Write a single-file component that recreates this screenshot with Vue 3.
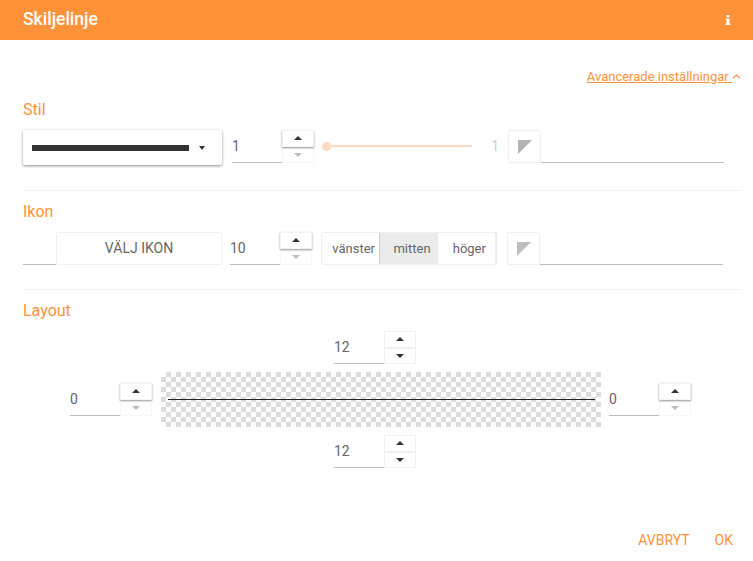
<script setup>
const toggles = [
  { label: 'vänster', on: false },
  { label: 'mitten', on: true },
  { label: 'höger', on: false }
]
</script>

<template>
  <div class="dialog">
    <header class="header">
      <span class="title">Skiljelinje</span>
      <svg class="info" width="6" height="10" viewBox="0 0 6 10"><path d="M1.500 0h3v2.200h-3zM.5 3.400h4v5.200h1v1.400h-5v-1.400h1v-3.800h-1z" fill="#fff"/></svg>
    </header>
    <main class="body">
      <div class="advanced">
        <a class="adv-link">Avancerade inställningar&nbsp;</a>
        <svg width="9" height="5" viewBox="0 0 9 5"><path d="M1 4.200 4.500 1 8 4.200" fill="none" stroke="#ff9138" stroke-width="1.200"/></svg>
      </div>

      <h3 class="sec first">Stil</h3>
      <div class="row">
        <div class="select">
          <span class="sel-line"></span>
          <span class="caret sel-caret"></span>
        </div>
        <div class="spin">
          <div class="val">1</div>
          <div class="btns">
            <div class="btn raised"><span class="up"></span></div>
            <div class="btn off"><span class="down"></span></div>
          </div>
        </div>
        <div class="slider"><span class="thumb"></span><span class="track"></span></div>
        <div class="slider-val">1</div>
        <div class="swatch"><svg width="14" height="14" viewBox="0 0 14 14"><path d="M0 0h14L0 14z" fill="#b3b3b3"/></svg></div>
        <div class="line"></div>
      </div>
      <div class="sep sep1"></div>

      <h3 class="sec sec2">Ikon</h3>
      <div class="row row2">
        <div class="stub"></div>
        <button class="pick">VÄLJ IKON</button>
        <div class="spin">
          <div class="val">10</div>
          <div class="btns">
            <div class="btn raised"><span class="up"></span></div>
            <div class="btn off"><span class="down"></span></div>
          </div>
        </div>
        <div class="toggle">
          <span v-for="t in toggles" :key="t.label" class="tg" :class="{ on: t.on }">{{ t.label }}</span>
        </div>
        <div class="swatch"><svg width="14" height="14" viewBox="0 0 14 14"><path d="M0 0h14L0 14z" fill="#bdbdbd"/></svg></div>
        <div class="line"></div>
      </div>
      <div class="sep sep2"></div>

      <h3 class="sec sec3">Layout</h3>
      <div class="spin pad-v">
        <div class="val">12</div>
        <div class="btns">
          <div class="btn"><span class="up"></span></div>
          <div class="btn"><span class="down"></span></div>
        </div>
      </div>
      <div class="mid">
        <div class="spin">
          <div class="val">0</div>
          <div class="btns">
            <div class="btn raised"><span class="up"></span></div>
            <div class="btn off"><span class="down"></span></div>
          </div>
        </div>
        <div class="checker"><span class="preview"></span></div>
        <div class="spin">
          <div class="val">0</div>
          <div class="btns">
            <div class="btn raised"><span class="up"></span></div>
            <div class="btn off"><span class="down"></span></div>
          </div>
        </div>
      </div>
      <div class="spin pad-v">
        <div class="val">12</div>
        <div class="btns">
          <div class="btn"><span class="up"></span></div>
          <div class="btn"><span class="down"></span></div>
        </div>
      </div>

      <footer class="footer">
        <span>AVBRYT</span>
        <span>OK</span>
      </footer>
    </main>
  </div>
</template>

<style>
html, body { margin: 0; background: #fff; }
</style>

<style scoped>
.dialog {
  width: 753px;
  height: 561px;
  overflow: hidden;
  background: #fff;
  font-family: Roboto, "Liberation Sans", sans-serif;
  color: #666;
}
.header {
  height: 40px;
  background: #ff9138;
  display: flex;
  align-items: center;
  justify-content: space-between;
  padding: 0 22px 2px 23px;
  box-sizing: border-box;
  color: #fff;
}
.title { font-size: 17.500px; font-weight: 500; }
.info { display: block; margin-top: 1px; }
.body { padding: 0 12px 0 23px; }
.advanced {
  margin-top: 26px;
  height: 20px;
  display: flex;
  align-items: center;
  justify-content: flex-end;
  color: #ff9138;
  font-size: 13px;
}
.adv-link { text-decoration: underline; }
.sec {
  margin: 11px 0 10px;
  height: 20px;
  line-height: 21px;
  font-size: 16px;
  font-weight: 400;
  color: #ff9138;
}
.sec.first { margin-top: 13px; margin-bottom: 11px; }
.sec.sec2 { line-height: 20px; }
.sec.sec3 { margin-top: 10px; margin-bottom: 11px; line-height: 22px; }
.row { display: flex; height: 33px; align-items: flex-start; margin-right: 17px; }
.row2 { margin-right: 18px; }
.select {
  width: 199px;
  height: 35px;
  margin-right: 10px;
  box-sizing: border-box;
  padding: 0 17px 0 9px;
  border-radius: 2px;
  background: #fff;
  box-shadow: 0 1px 3px rgba(0, 0, 0, .45);
  display: flex;
  align-items: center;
  justify-content: space-between;
}
.sel-line { width: 157px; height: 6px; background: #333; margin-top: 1px; }
.caret {
  width: 0; height: 0;
  border: 3.500px solid transparent;
  border-top: 4px solid #333;
  border-bottom: 0;
}
.spin { display: flex; width: 82px; height: 33px; flex: none; }
.val {
  width: 50px;
  height: 33px;
  box-sizing: border-box;
  border-bottom: 1px solid #bdbdbd;
  font-size: 14px;
  line-height: 32px;
}
.btns { width: 32px; height: 33px; display: flex; flex-direction: column; }
.btn {
  flex: 1;
  box-sizing: border-box;
  border: 1px solid #f0f0f0;
  display: flex;
  align-items: center;
  justify-content: center;
}
.btn.raised { border-color: #f2f2f2; box-shadow: 0 1px 2px rgba(0, 0, 0, .4); position: relative; }
.btn.off { border-color: #f7f7f7; }
.up, .down { width: 0; height: 0; border-left: 4px solid transparent; border-right: 4px solid transparent; }
.up { border-bottom: 4px solid #333; }
.down { border-top: 4px solid #333; }
.off .down { border-top-color: #bdbdbd; }
.slider { width: 150px; height: 33px; margin-left: 8px; display: flex; align-items: center; }
.thumb { width: 9px; height: 9px; flex: none; border-radius: 50%; background: #ffd9bd; margin-top: -1px; }
.track { flex: 1; height: 2px; background: #ffd9bd; margin-top: -1px; }
.slider-val { width: 36px; padding-right: 9px; box-sizing: border-box; text-align: right; font-size: 14px; line-height: 32px; color: #ccc; }
.swatch {
  width: 33px;
  height: 33px;
  flex: none;
  box-sizing: border-box;
  border: 1px solid #f0f0f0;
  border-radius: 2px;
  display: flex;
  align-items: center;
  justify-content: center;
}
.line { flex: 1; height: 33px; box-sizing: border-box; border-bottom: 1px solid #bdbdbd; }
.sep { height: 1px; background: #eee; }
.sep1 { margin-top: 27px; }
.sep2 { margin-top: 24px; }
.stub { width: 33px; height: 33px; box-sizing: border-box; border-bottom: 1px solid #bdbdbd; flex: none; }
.pick {
  width: 166px;
  height: 33px;
  margin-right: 8px;
  box-sizing: border-box;
  border: 1px solid #f0f0f0;
  border-radius: 2px;
  background: #fff;
  color: #666;
  font: 400 14px Roboto, "Liberation Sans", sans-serif;
  padding: 0 0 2px;
}
.toggle {
  margin-left: 9px;
  margin-right: 11px;
  width: 175px;
  height: 33px;
  flex: none;
  display: flex;
  box-sizing: border-box;
  border: 1px solid #f0f0f0;
  border-radius: 2px;
  box-shadow: 1px 0 1px rgba(0, 0, 0, .1);
}
.tg { flex: 1 1 0; padding-left: 6px; text-align: center; font-size: 13px; line-height: 31px; }
.tg.on { background: #ebebeb; border-left: 1px solid #ccc; }
.pad-v { margin-left: 311px; }
.mid { display: flex; align-items: center; margin: 8px 0 8px 47px; }
.checker {
  width: 440px;
  height: 55px;
  flex: none;
  margin: 0 8px 0 9px;
  box-sizing: border-box;
  padding-left: 1px;
  display: flex;
  align-items: center;
  justify-content: center;
  background-color: #fff;
  background-image: conic-gradient(#dcdcdc 25%, #fff 0 50%, #dcdcdc 0 75%, #fff 0);
  background-size: 10px 10px;
}
.preview { width: 427px; height: 1px; background: #222; }
.footer {
  margin-top: 63px;
  display: flex;
  justify-content: flex-end;
  gap: 25px;
  padding-right: 8px;
  color: #ff9138;
  font-size: 14px;
  line-height: 18px;
}
</style>
